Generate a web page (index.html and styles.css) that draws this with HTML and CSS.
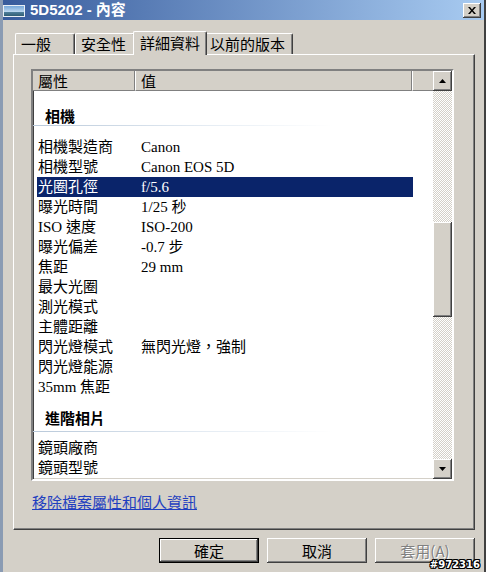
FILE: index.html
```html
<!DOCTYPE html>
<html lang="zh-Hant">
  <head>
    <meta charset="UTF-8" />
    <meta name="viewport" content="width=device-width, initial-scale=1.0" />
    <title>5D5202 - 內容</title>
    <link rel="stylesheet" href="styles.css">
  </head>
  <body>
    <div class="window">
      <div class="titlebar">
        <svg class="app-icon" width="22" height="12" viewBox="0 0 22 12">
          <defs>
            <linearGradient id="sky" x1="0" y1="0" x2="0" y2="1">
              <stop offset="0" stop-color="#6fa3d8" />
              <stop offset="0.55" stop-color="#b9d5ee" />
              <stop offset="0.6" stop-color="#4f7f9c" />
              <stop offset="1" stop-color="#2d5a6e" />
            </linearGradient>
          </defs>
          <rect x="0.5" y="0.5" width="21" height="11" fill="url(#sky)" stroke="#e8eef4" />
        </svg>
        <span class="title">5D5202 - 內容</span>
        <div class="close">
          <svg width="8" height="7" viewBox="0 0 8 7">
            <path d="M0 0h2l2 2.5L6 0h2L5 3.5 8 7H6L4 4.5 2 7H0l3-3.5z" fill="#000" />
          </svg>
        </div>
      </div>

      <div class="tabs">
        <div class="tab tab-general">一般</div>
        <div class="tab tab-security">安全性</div>
        <div class="tab tab-details active">詳細資料</div>
        <div class="tab tab-previous">以前的版本</div>
      </div>

      <div class="panel">
        <div class="listview">
          <div class="list-main">
            <div class="list-header">
              <div class="hcell col-name">屬性</div>
              <div class="hcell col-value">值</div>
              <div class="hcell col-rest"></div>
            </div>
            <div class="list-body">
              <div class="group first">相機</div>
              <div class="row"><span class="name">相機製造商</span><span class="value">Canon</span></div>
              <div class="row"><span class="name">相機型號</span><span class="value">Canon EOS 5D</span></div>
              <div class="row selected"><span class="name">光圈孔徑</span><span class="value">f/5.6</span></div>
              <div class="row"><span class="name">曝光時間</span><span class="value">1/25 秒</span></div>
              <div class="row"><span class="name">ISO 速度</span><span class="value">ISO-200</span></div>
              <div class="row"><span class="name">曝光偏差</span><span class="value">-0.7 步</span></div>
              <div class="row"><span class="name">焦距</span><span class="value">29 mm</span></div>
              <div class="row"><span class="name">最大光圈</span><span class="value"></span></div>
              <div class="row"><span class="name">測光模式</span><span class="value"></span></div>
              <div class="row"><span class="name">主體距離</span><span class="value"></span></div>
              <div class="row"><span class="name">閃光燈模式</span><span class="value">無閃光燈，強制</span></div>
              <div class="row"><span class="name">閃光燈能源</span><span class="value"></span></div>
              <div class="row"><span class="name">35mm 焦距</span><span class="value"></span></div>
              <div class="group second">進階相片</div>
              <div class="row"><span class="name">鏡頭廠商</span><span class="value"></span></div>
              <div class="row"><span class="name">鏡頭型號</span><span class="value"></span></div>
            </div>
          </div>
          <div class="scrollbar">
            <div class="sb-btn">
              <svg width="7" height="4" viewBox="0 0 7 4"><polygon points="0,4 7,4 3.5,0" fill="#000" /></svg>
            </div>
            <div class="sb-track"><div class="sb-thumb"></div></div>
            <div class="sb-btn">
              <svg width="7" height="4" viewBox="0 0 7 4"><polygon points="0,0 7,0 3.5,4" fill="#000" /></svg>
            </div>
          </div>
        </div>
        <a class="link" href="#">移除檔案屬性和個人資訊</a>
      </div>

      <div class="buttons">
        <div class="btn default"><span>確定</span></div>
        <div class="btn"><span>取消</span></div>
        <div class="btn disabled"><span>套用(A)</span></div>
      </div>

      <div class="stamp">#972316</div>
    </div>
  </body>
</html>
```

FILE: styles.css
```css
body {
  margin: 0;
  font-family: "Noto Sans CJK TC", sans-serif;
  font-size: 15px;
  color: #000;
  background: #d4d0c8;
}
.window {
  position: relative;
  width: 486px;
  height: 572px;
  box-sizing: border-box;
  background: #d4d0c8;
  border-left: 3px solid #8a9bb3;
  border-right: 2px solid #404040;
  overflow: hidden;
}

/* title bar */
.titlebar {
  height: 20px;
  display: flex;
  align-items: center;
  padding-right: 3px;
  background: linear-gradient(to right, #375b9c, #a8cbf1);
}
.app-icon {
  flex: none;
  margin-top: 1px;
}
.title {
  margin-left: 5px;
  flex: 1;
  color: #fff;
  font-family: "Liberation Sans", "Noto Sans CJK TC", sans-serif;
  font-weight: bold;
  font-size: 15px;
  line-height: 20px;
}
.close {
  width: 18px;
  height: 15px;
  box-sizing: border-box;
  display: flex;
  align-items: center;
  justify-content: center;
  background: #d4d0c8;
  box-shadow: inset -1px -1px #404040, inset 1px 1px #fff, inset -2px -2px #808080;
}

/* tabs */
.tabs {
  position: relative;
  z-index: 1;
  display: flex;
  align-items: flex-end;
  height: 24px;
  margin: 11px 0 -1px 12px;
}
.tab {
  height: 21px;
  margin-bottom: 1px;
  box-sizing: border-box;
  padding-left: 5px;
  line-height: 20px;
  background: #d4d0c8;
  border-top: 1px solid #fff;
  border-left: 1px solid #fff;
  border-right: 1px solid #404040;
  border-radius: 2px 2px 0 0;
  box-shadow: inset -1px 0 #808080;
}
.tab-general { width: 60px; }
.tab-security { width: 60px; }
.tab-details { width: 70px; }
.tab-previous { width: 88px; padding-left: 4px; }
.tab.active {
  width: 74px;
  height: 24px;
  margin: 0 -2px;
  padding-left: 6px;
  line-height: 22px;
  position: relative;
  z-index: 1;
}

/* panel */
.panel {
  width: 462px;
  height: 476px;
  margin-left: 10px;
  box-sizing: border-box;
  padding: 14px 0 0 17px;
  border: 1px solid;
  border-color: #fff #404040 #404040 #fff;
  box-shadow: inset -1px -1px #808080;
}
.listview {
  width: 423px;
  height: 412px;
  box-sizing: border-box;
  display: flex;
  background: #fff;
  border: 2px solid;
  border-color: #808080 #fff #fff #808080;
  box-shadow: inset 1px 1px #404040, inset -1px -1px #d4d0c8;
}
.list-main {
  flex: 1;
  padding-top: 0;
  overflow: hidden;
}
.list-header {
  display: flex;
  height: 20px;
}
.hcell {
  box-sizing: border-box;
  height: 20px;
  line-height: 19px;
  padding-left: 5px;
  background: #d4d0c8;
  border-left: 1px solid #fff;
  border-right: 1px solid #808080;
  border-bottom: 1px solid #808080;
}
.col-name { width: 102px; padding-left: 5px; border-left: none; }
.col-value { width: 277px; }
.col-rest { flex: 1; border-right: none; }

.list-body {
  font-family: "Liberation Serif", "Noto Sans CJK TC", serif;
}
.group {
  height: 20px;
  line-height: 19px;
  padding-left: 12px;
  font-family: "Noto Sans CJK TC", sans-serif;
  font-weight: bold;
  background: linear-gradient(to right, #b9c9da, #e6edf4 180px, #fff 300px) left bottom / 100% 1px no-repeat;
}
.group.first { margin: 15px 0 11px; }
.group.second { margin: 11px 0 6px; height: 24px; }
.row {
  display: flex;
  width: 376px;
  height: 20px;
  margin-left: 4px;
  line-height: 20px;
  white-space: nowrap;
}
.row .name {
  width: 103px;
  padding-left: 1px;
}
.row.selected {
  background: #0a246a;
  color: #fff;
}

/* scrollbar */
.scrollbar {
  width: 19px;
  display: flex;
  flex-direction: column;
}
.sb-btn {
  height: 20px;
  box-sizing: border-box;
  display: flex;
  align-items: center;
  justify-content: center;
  background: #d4d0c8;
  box-shadow: inset -1px -1px #404040, inset 1px 1px #fff, inset -2px -2px #808080;
}
.sb-track {
  flex: 1;
  background: repeating-conic-gradient(#d4d0c8 0 25%, #fff 0 50%) 0 0 / 2px 2px;
}
.sb-thumb {
  height: 95px;
  margin-top: 131px;
  background: #d4d0c8;
  box-shadow: inset -1px -1px #404040, inset 1px 1px #fff, inset -2px -2px #808080;
}

.link {
  display: inline-block;
  margin-top: 11px;
  margin-left: 1px;
  line-height: 20px;
  color: #1f3fc0;
  text-decoration: underline;
}

/* dialog buttons */
.buttons {
  display: flex;
  justify-content: flex-end;
  gap: 8px;
  margin-top: 8px;
  padding-right: 9px;
}
.btn {
  width: 100px;
  height: 25px;
  box-sizing: border-box;
  display: flex;
  align-items: center;
  justify-content: center;
  background: #d4d0c8;
  box-shadow: inset -1px -1px #404040, inset 1px 1px #fff, inset -2px -2px #808080;
}
.btn.default {
  border: 1px solid #000;
}
.btn.disabled {
  color: #808080;
  text-shadow: 1px 1px #fff;
}

.stamp {
  position: absolute;
  right: 4px;
  bottom: 1px;
  color: #fff;
  font-family: "DejaVu Sans", sans-serif;
  font-weight: bold;
  font-size: 10px;
  line-height: 12px;
  text-shadow: 1px 0 #000, -1px 0 #000, 0 1px #000, 0 -1px #000, 1px 1px #000, -1px -1px #000, 1px -1px #000, -1px 1px #000;
}
```
